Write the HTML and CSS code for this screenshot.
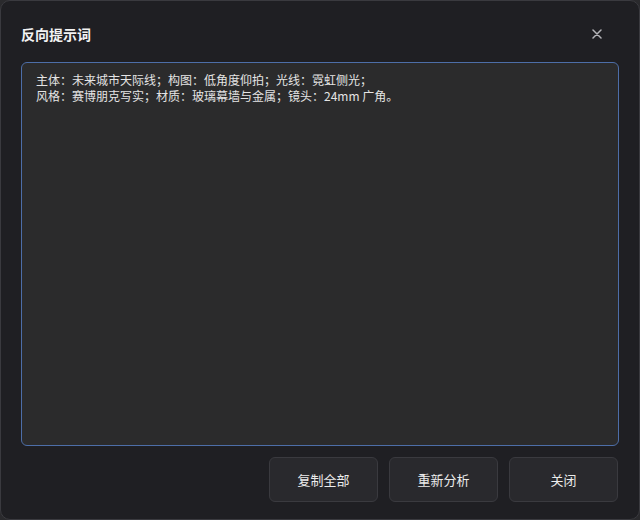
FILE: index.html
```html
<!DOCTYPE html>
<html lang="zh-CN">
<head>
    <meta charset="UTF-8">
    <meta name="viewport" content="width=device-width, initial-scale=1.0">
    <title>反向提示词</title>
    <link rel="stylesheet" href="styles.css">
</head>
<body>
    <div class="dialog">
        <div class="dialog-header">
            <div class="dialog-title">反向提示词</div>
            <button class="close-btn" aria-label="关闭">
                <svg width="10" height="10" viewBox="0 0 10 10">
                    <path d="M1 1 L9 9 M9 1 L1 9" stroke="currentColor" stroke-width="1.5" stroke-linecap="round"/>
                </svg>
            </button>
        </div>
        <div class="prompt-box">
            <textarea class="prompt-text" spellcheck="false">主体：未来城市天际线；构图：低角度仰拍；光线：霓虹侧光；
风格：赛博朋克写实；材质：玻璃幕墙与金属；镜头：24mm 广角。</textarea>
        </div>
        <div class="dialog-actions">
            <button class="action-btn">复制全部</button>
            <button class="action-btn">重新分析</button>
            <button class="action-btn">关闭</button>
        </div>
    </div>
</body>
</html>
```

FILE: styles.css
```css
* {
    margin: 0;
    padding: 0;
    box-sizing: border-box;
    font-family: "Noto Sans CJK SC", "Noto Sans", sans-serif;
}

body {
    background: #2a2a2d;
    width: 640px;
    height: 520px;
    overflow: hidden;
}

.dialog {
    width: 640px;
    height: 520px;
    background: #1f1f23;
    border: 1px solid #3a3a3f;
    border-radius: 10px;
    display: flex;
    flex-direction: column;
    padding: 0 20px 17px 20px;
}

.dialog-header {
    display: flex;
    align-items: center;
    justify-content: space-between;
    height: 61px;
    padding-top: 4px;
}

.dialog-title {
    color: #f2f2f2;
    font-size: 14px;
    font-weight: 700;
}

.close-btn {
    background: none;
    border: none;
    color: #b4b4b8;
    width: 22px;
    height: 22px;
    display: flex;
    align-items: center;
    justify-content: center;
    margin-right: 11px;
    cursor: pointer;
}

.prompt-box {
    flex: 1;
    display: flex;
}

.prompt-text {
    flex: 1;
    background: #2b2b2c;
    border: 1px solid #4d6ea8;
    border-radius: 6px;
    color: #e4e4e4;
    font-size: 12px;
    line-height: 16px;
    padding: 9px 14px;
    resize: none;
    outline: none;
}

.dialog-actions {
    display: flex;
    justify-content: flex-end;
    gap: 11px;
    padding-top: 11px;
    padding-right: 1px;
}

.action-btn {
    width: 109px;
    height: 45px;
    background: #29292d;
    border: 1px solid #3a3a3f;
    border-radius: 6px;
    color: #ececec;
    font-size: 13px;
    cursor: pointer;
}

.action-btn:hover {
    background: #323237;
}
```
